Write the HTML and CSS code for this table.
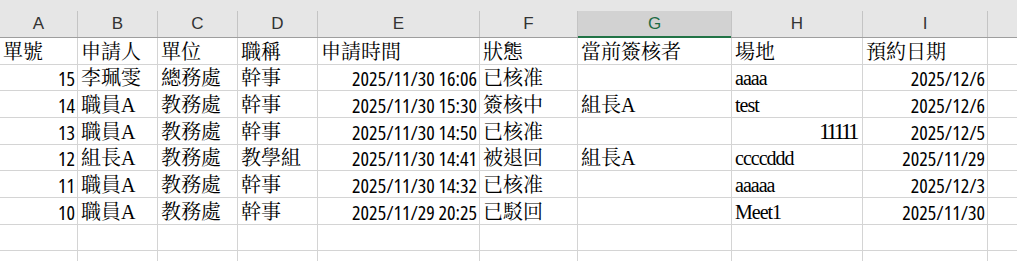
FILE: index.html
```html
<!DOCTYPE html>
<html lang="zh-Hant">
<head>
    <meta charset="UTF-8">
    <meta name="viewport" content="width=device-width, initial-scale=1.0">
    <title>預約申請</title>
    <link rel="stylesheet" href="styles.css">
</head>
<body>
    <div class="sheet">
        <!-- Column letters -->
        <div class="col-heads">
            <div class="col-head">A</div>
            <div class="col-head">B</div>
            <div class="col-head">C</div>
            <div class="col-head">D</div>
            <div class="col-head">E</div>
            <div class="col-head">F</div>
            <div class="col-head selected">G</div>
            <div class="col-head">H</div>
            <div class="col-head">I</div>
            <div class="col-head"></div>
        </div>

        <!-- Cells -->
        <div class="cells">
            <div class="cell">單號</div>
            <div class="cell">申請人</div>
            <div class="cell">單位</div>
            <div class="cell">職稱</div>
            <div class="cell">申請時間</div>
            <div class="cell">狀態</div>
            <div class="cell">當前簽核者</div>
            <div class="cell">場地</div>
            <div class="cell">預約日期</div>
            <div class="cell"></div>

            <div class="cell num">15</div>
            <div class="cell">李珮雯</div>
            <div class="cell">總務處</div>
            <div class="cell">幹事</div>
            <div class="cell num">2025/11/30 16:06</div>
            <div class="cell">已核准</div>
            <div class="cell"></div>
            <div class="cell latin">aaaa</div>
            <div class="cell num">2025/12/6</div>
            <div class="cell"></div>

            <div class="cell num">14</div>
            <div class="cell">職員A</div>
            <div class="cell">教務處</div>
            <div class="cell">幹事</div>
            <div class="cell num">2025/11/30 15:30</div>
            <div class="cell">簽核中</div>
            <div class="cell">組長A</div>
            <div class="cell latin">test</div>
            <div class="cell num">2025/12/6</div>
            <div class="cell"></div>

            <div class="cell num">13</div>
            <div class="cell">職員A</div>
            <div class="cell">教務處</div>
            <div class="cell">幹事</div>
            <div class="cell num">2025/11/30 14:50</div>
            <div class="cell">已核准</div>
            <div class="cell"></div>
            <div class="cell serif-num">11111</div>
            <div class="cell num">2025/12/5</div>
            <div class="cell"></div>

            <div class="cell num">12</div>
            <div class="cell">組長A</div>
            <div class="cell">教務處</div>
            <div class="cell">教學組</div>
            <div class="cell num">2025/11/30 14:41</div>
            <div class="cell">被退回</div>
            <div class="cell">組長A</div>
            <div class="cell latin">ccccddd</div>
            <div class="cell num">2025/11/29</div>
            <div class="cell"></div>

            <div class="cell num">11</div>
            <div class="cell">職員A</div>
            <div class="cell">教務處</div>
            <div class="cell">幹事</div>
            <div class="cell num">2025/11/30 14:32</div>
            <div class="cell">已核准</div>
            <div class="cell"></div>
            <div class="cell latin">aaaaa</div>
            <div class="cell num">2025/12/3</div>
            <div class="cell"></div>

            <div class="cell num">10</div>
            <div class="cell">職員A</div>
            <div class="cell">教務處</div>
            <div class="cell">幹事</div>
            <div class="cell num">2025/11/29 20:25</div>
            <div class="cell">已駁回</div>
            <div class="cell"></div>
            <div class="cell latin">Meet1</div>
            <div class="cell num">2025/11/30</div>
            <div class="cell"></div>

            <div class="cell"></div><div class="cell"></div><div class="cell"></div><div class="cell"></div><div class="cell"></div>
            <div class="cell"></div><div class="cell"></div><div class="cell"></div><div class="cell"></div><div class="cell"></div>

            <div class="cell"></div><div class="cell"></div><div class="cell"></div><div class="cell"></div><div class="cell"></div>
            <div class="cell"></div><div class="cell"></div><div class="cell"></div><div class="cell"></div><div class="cell"></div>
        </div>
    </div>
</body>
</html>
```

FILE: styles.css
```css
* {
    margin: 0;
    padding: 0;
    box-sizing: border-box;
}

body {
    background: #fff;
    overflow: hidden;
    font-family: "Liberation Serif", "Noto Serif CJK TC", "Noto Sans CJK TC", serif;
    color: #000;
}

.sheet {
    width: 1017px;
    height: 261px;
    overflow: hidden;
}

/* Column letter strip */
.col-heads {
    display: grid;
    grid-template-columns: 77px 79px 79px 79px 161px 97px 153px 130px 124px 1fr;
    column-gap: 1px;
    padding-top: 11px;
    background: linear-gradient(#e6e6e6 11px, #c4c4c4 11px);
    border-bottom: 1px solid #9e9e9e;
}

.col-head {
    height: 26px;
    background: #e6e6e6;
    display: flex;
    align-items: center;
    justify-content: center;
    font-family: "Liberation Sans", "Open Sans", sans-serif;
    font-size: 17px;
    color: #333;
}

.col-head.selected {
    position: relative;
    background: #d2d2d2;
    color: #1e6b44;
}

.col-head.selected::after {
    content: "";
    position: absolute;
    left: 0;
    right: 0;
    bottom: -1px;
    height: 2px;
    background: #217346;
}

/* Grid of cells */
.cells {
    display: grid;
    grid-template-columns: 77px 79px 79px 79px 161px 97px 153px 130px 124px 1fr;
    grid-template-rows: 26px 25px 26px 26px 25px 26px 26px 25px 10px;
    gap: 1px;
    background: #d4d4d4;
}

.cell {
    background: #fff;
    display: flex;
    align-items: flex-end;
    padding: 0 2px 1px 3px;
    font-size: 20px;
    line-height: 22px;
    white-space: nowrap;
}

/* numbers and dates: condensed sans, right aligned */
.cell.num {
    justify-content: flex-end;
    font-family: "Open Sans", "Noto Sans", sans-serif;
    font-stretch: 83%;
    font-weight: 400;
    font-size: 20px;
    padding-bottom: 0;
}

.cell.latin {
    font-size: 20px;
    letter-spacing: -1px;
    padding-bottom: 1px;
}

.cell.serif-num {
    justify-content: flex-end;
    font-size: 23px;
    line-height: 24px;
    letter-spacing: -3.4px;
    padding-right: 6px;
    padding-bottom: 0;
}
```
